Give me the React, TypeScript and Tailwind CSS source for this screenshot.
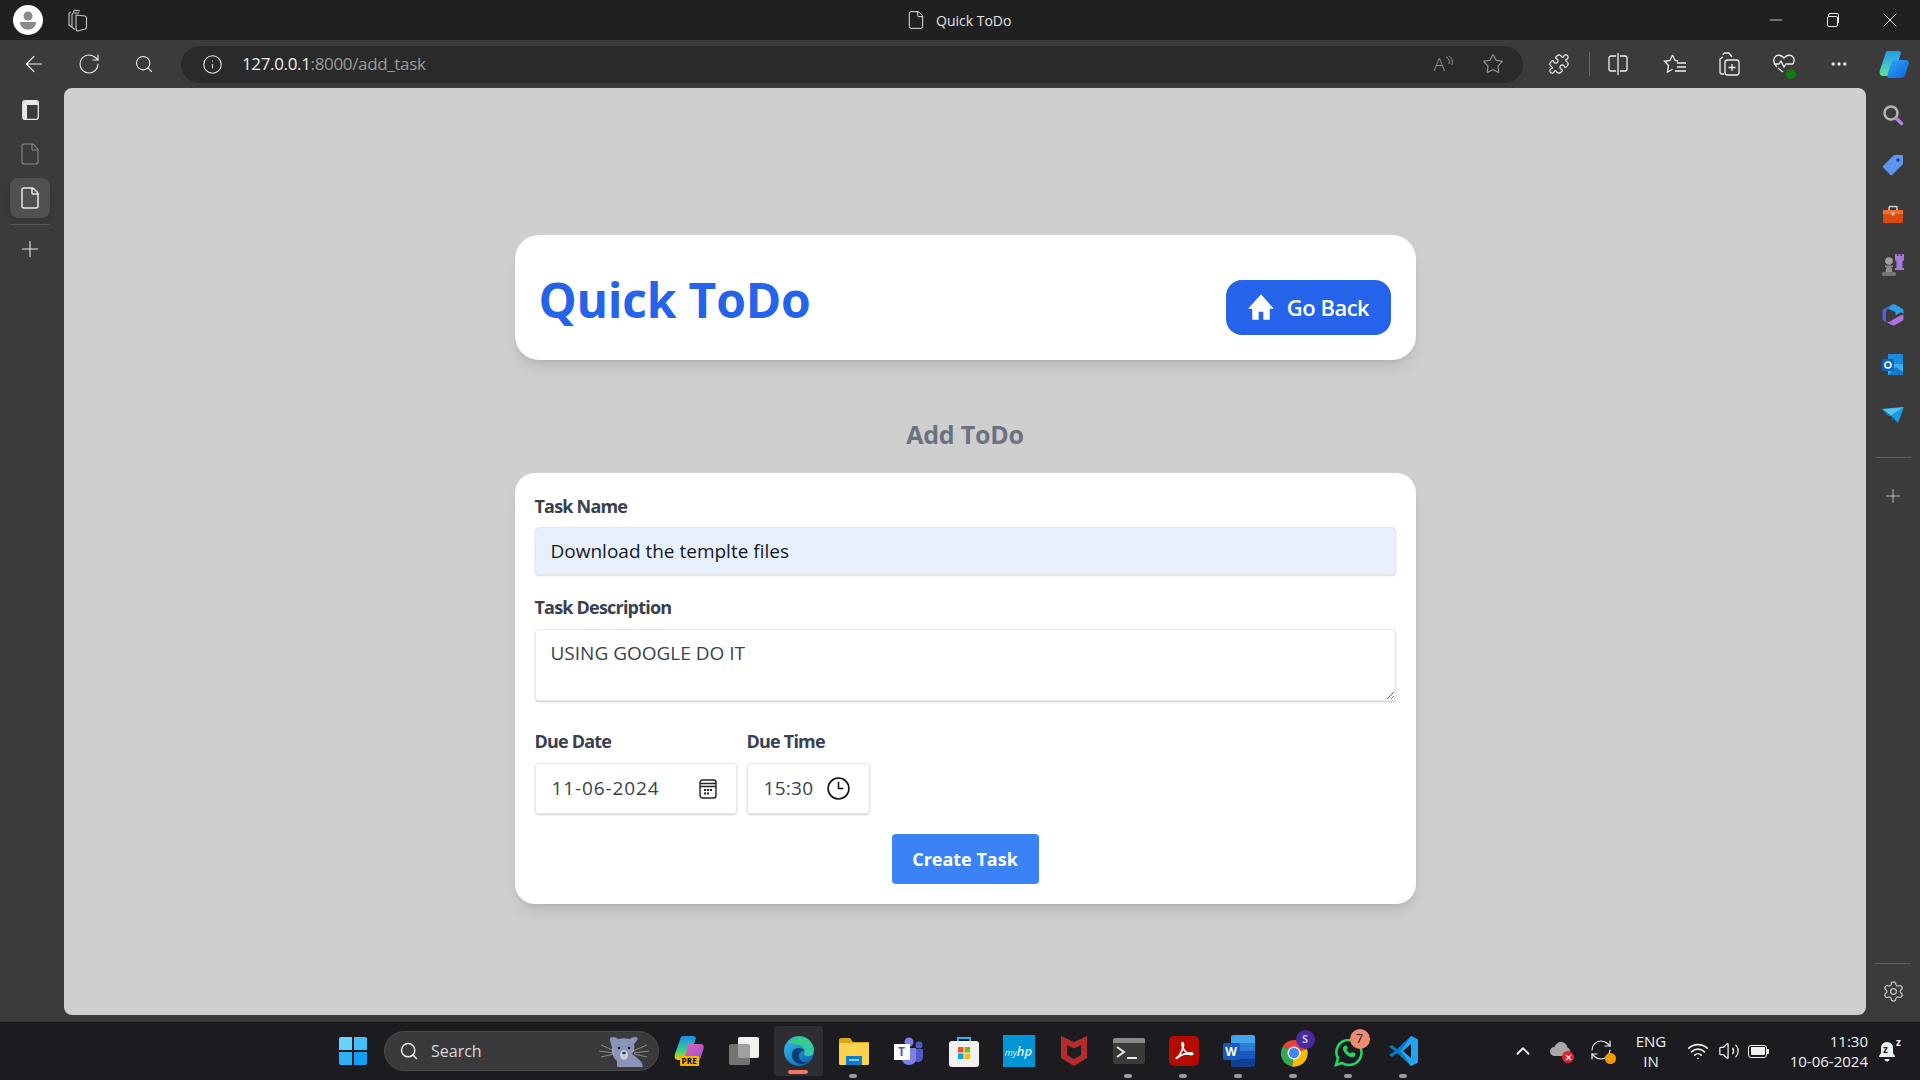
import React from 'react';
import {
  ArrowLeft, RotateCw, RefreshCw, Search, Info, Star, Puzzle, Ellipsis, Plus, Settings,
  Minus, X, File, ChevronUp, Wifi, Volume2, Clock3,
} from 'lucide-react';

const FONT = 'font-["Open_Sans","Noto_Sans",sans-serif]';

// Small coloured logos drawn by hand
const ProfileIcon = () => (
  <svg width="30" height="30" viewBox="0 0 30 30">
    <circle cx="15" cy="15" r="15" fill="#fff" />
    <circle cx="15" cy="11" r="4.5" fill="#8a8a8a" />
    <path d="M7 17h16c0 5-3.5 7.5-8 7.5S7 22 7 17z" fill="#8a8a8a" />
  </svg>
);

const TabsIcon = () => (
  <svg width="22" height="24" viewBox="0 0 22 24" fill="none" stroke="#c8c8c8" strokeWidth="1.100">
    <path d="M9 21L8 21 3 17V6c0-1 1-2 2-2" />
    <path d="M7 4l2-2 5 1" />
    <path d="M6 19V7c0-1 1-2 2-2h5" />
    <path d="M10 7l9 1c1 0 1.500 1 1.500 2v9c0 1-.5 1.500-1.500 2l-7 2c-1 0-2-.5-2-2z" />
  </svg>
);

const SidebarToggle = () => (
  <svg width="17" height="20" viewBox="0 0 17 20">
    <rect x=".7" y=".7" width="15.600" height="18.600" rx="2" fill="none" stroke="#e8e8e8" strokeWidth="1.300" />
    <path d="M1 3C1 2 2 1 3 1h11c1 0 2 1 2 2v2H5v14H3c-1 0-2-1-2-2z" fill="#e8e8e8" />
  </svg>
);

const SplitIcon = () => (
  <svg width="20" height="24" viewBox="0 0 20 24" fill="none" stroke="currentColor" strokeWidth="1.300">
    <path d="M8 4H3c-1 0-2 1-2 2v11c0 1 1 2 2 2h5" />
    <path d="M12 4h5c1 0 2 1 2 2v11c0 1-1 2-2 2h-5" />
    <path d="M10 1v22" />
  </svg>
);

const FavoritesIcon = () => (
  <svg width="24" height="24" viewBox="0 0 24 24" fill="none" stroke="currentColor" strokeWidth="1.300">
    <path d="M9.500 3l2.500 5.500 3 .5M9.500 3L7 8.500l-5.500.8L5.500 13.500 4.500 20l5-2.800" />
    <path d="M14 11h9M14 15h9M12 19h11" />
  </svg>
);

const CopilotLogo = () => (
  <svg width="32" height="32" viewBox="0 0 32 32">
    <defs>
      <linearGradient id="cpA" x1="0" y1="0" x2="0" y2="1">
        <stop offset="0" stopColor="#1f9cf0" />
        <stop offset="1" stopColor="#5fe0a0" />
      </linearGradient>
      <linearGradient id="cpB" x1="0" y1="0" x2="1" y2="1">
        <stop offset="0" stopColor="#2fa8f5" />
        <stop offset="1" stopColor="#1060e0" />
      </linearGradient>
    </defs>
    <path d="M10 3h10c2 0 3 1 3 2l-6 19c-1 3-3 4-5 4H5C2 28 1 25 2 22L7 7c.6-2.500 1.500-4 3-4z" fill="url(#cpA)" />
    <path d="M14 12h13c3 0 4.500 2 3.500 5l-3 9c-1 3-2.500 4-5 4H11c-2 0-2-2-1.500-3.500z" fill="url(#cpB)" />
  </svg>
);

const CopilotPreLogo = () => (
  <div className="relative w-[32px] h-[32px]">
    <svg width="32" height="28" viewBox="0 0 32 28">
      <defs>
        <linearGradient id="cppA" x1="0" y1="0" x2="0" y2="1">
          <stop offset="0" stopColor="#1a8cf0" />
          <stop offset=".6" stopColor="#38d08a" />
          <stop offset="1" stopColor="#f5c800" />
        </linearGradient>
        <linearGradient id="cppB" x1="0" y1="0" x2="1" y2="1">
          <stop offset="0" stopColor="#e85fb0" />
          <stop offset="1" stopColor="#9050e0" />
        </linearGradient>
      </defs>
      <path d="M10 1h10c2 0 3 1 3 2l-6 18c-1 3-3 4-5 4H5C2 25 1 22 2 19L7 5c.6-2.500 1.500-4 3-4z" fill="url(#cppA)" />
      <path d="M15 9h12c3 0 4.500 2 3.500 5l-3 9c-1 3-2.500 4-5 4H13c-2 0-2-2-1.500-3.500z" fill="url(#cppB)" />
    </svg>
    <span className={`absolute left-[7px] top-[21px] px-[2px] bg-[#f5b800] text-black text-[8px] leading-[10px] font-bold rounded-[1px] tracking-wide ${FONT}`}>PRE</span>
  </div>
);

const SearchSide = () => (
  <svg width="24" height="24" viewBox="0 0 24 24" fill="none">
    <circle cx="10" cy="10" r="6.500" stroke="#b5b5b5" strokeWidth="2.500" />
    <path d="M15.500 15.500l5 5" stroke="#b480e0" strokeWidth="3.500" strokeLinecap="round" />
  </svg>
);
const TagSide = () => (
  <svg width="24" height="24" viewBox="0 0 24 24">
    <path d="M13 2h8c.6 0 1 .4 1 1v8L11 22c-.5.5-1 .5-1.500 0L2 14.500c-.5-.5-.5-1 0-1.500z" fill="#5f95ee" />
    <circle cx="17" cy="7" r="1.800" fill="#1f3a70" />
  </svg>
);
const ToolboxSide = () => (
  <svg width="24" height="24" viewBox="0 0 24 24">
    <path d="M8 7V4.500C8 4 8.500 3.500 9 3.500h6c.5 0 1 .5 1 1V7" fill="none" stroke="#d0d0d0" strokeWidth="1.500" />
    <path d="M2 7h20l.3 4H1.700z" fill="#f0703a" />
    <rect x="2" y="11" width="20" height="9" rx="1" fill="#d84a10" />
    <circle cx="12" cy="11" r="1.800" fill="#e0c0b0" />
  </svg>
);
const ChessSide = () => (
  <svg width="24" height="24" viewBox="0 0 24 24">
    <path d="M14 1h2v2h1.500V1h2v2H21V1h2v6l-1.500 1.500V15H23v2h-9v-2h1.500V8.500L14 7z" fill="#a97ade" />
    <circle cx="8" cy="8" r="3.800" fill="#a0a0a0" />
    <path d="M4 12.500h8v1.500H10.500l1 5H4.500l1-5H4z" fill="#8d8d8d" />
    <rect x="1" y="19" width="14" height="4" rx="1.500" fill="#757575" />
  </svg>
);
const M365Side = () => (
  <svg width="24" height="24" viewBox="0 0 24 24">
    <path d="M11 1.500L3 6c-1 .6-1.500 1.500-1.500 2.500v7c0 1 .5 2 1.500 2.500l2 1V9c0-1.500 1-2.700 2-3.300z" fill="#5a5fd8" />
    <path d="M11 1.500c1-.5 2-.5 3 0l7 4c1 .6 1.500 1.500 1.500 2.500v4c0-2-2.500-3-4-2l-4 2.500V9L7 5.700z" fill="#2aa0e8" />
    <path d="M22.500 12v3.500c0 1-.5 2-1.500 2.500l-7 4c-1 .5-2 .5-3 0l-6-3c2 .5 3.500 0 5-1l8-5c1.500-1 4.500-1 4.500-1z" fill="#b070e0" />
  </svg>
);
const OutlookSide = () => (
  <svg width="24" height="24" viewBox="0 0 24 24">
    <rect x="7" y="1" width="15" height="10" fill="#1a8ce0" />
    <path d="M7 11l15 0v11H7z" fill="#36b0ee" />
    <path d="M7 22l8-8 7 5v3z" fill="#1a78c8" />
    <rect x="1" y="6" width="12" height="12" rx="1.500" fill="#0c64c0" />
    <circle cx="7" cy="12" r="3" fill="none" stroke="#fff" strokeWidth="1.600" />
  </svg>
);
const SendSide = () => (
  <svg width="24" height="24" viewBox="0 0 24 24">
    <path d="M1 6l22-2-13 9z" fill="#4cc4f4" />
    <path d="M23 4l-6 16-7-7z" fill="#1b9ae8" />
    <path d="M10 13l-3 0-6-7z" fill="#0c78c8" />
    <path d="M10 13l1 5 3-2z" fill="#0a5fa8" />
  </svg>
);

const WindowsLogo = () => (
  <div className="grid grid-cols-2 gap-[2px] w-[28px] h-[28px]">
    <div className="bg-[#69d2fb] rounded-tl-[2px]" />
    <div className="bg-[#45bdf8] rounded-tr-[2px]" />
    <div className="bg-[#2cb0f8] rounded-bl-[2px]" />
    <div className="bg-[#119ff5] rounded-br-[2px]" />
  </div>
);

const Mascot = () => (
  <svg width="50" height="32" viewBox="0 0 50 32">
    <path d="M11 3c3-2 6-1 8 1 4-1 8-1 12 0 2-2 5-3 8-1-1 3-3 5-4 6 1 4 0 8-2 10 4 3 8 6 10 9l1 4H18l0-6c-4-3-6-9-5-14-1-2-2-6-2-9z" fill="#8a93b8" />
    <circle cx="20" cy="13" r="1.300" fill="#222" />
    <circle cx="30" cy="13" r="1.300" fill="#222" />
    <ellipse cx="25" cy="20" rx="4" ry="5" fill="#c8cde0" />
    <ellipse cx="25" cy="18" rx="1.800" ry="1.300" fill="#333" />
    <path d="M2 10l14 6M0 16l15 2M2 22l13-3M48 10l-14 6M50 16l-15 2M48 22l-13-3" stroke="#c8c8c8" strokeWidth=".6" />
  </svg>
);

const EdgeLogo = () => (
  <svg width="32" height="32" viewBox="0 0 32 32">
    <defs>
      <linearGradient id="edA" x1="0" y1="0" x2="1" y2="1">
        <stop offset="0" stopColor="#35c1f1" />
        <stop offset="1" stopColor="#0c59a4" />
      </linearGradient>
      <linearGradient id="edB" x1="0" y1="0" x2="1" y2="1">
        <stop offset="0" stopColor="#38d06a" />
        <stop offset="1" stopColor="#2fc9c0" />
      </linearGradient>
    </defs>
    <circle cx="16" cy="16" r="15" fill="url(#edA)" />
    <path d="M6 8C10 1 21-1 27 6c4 4 4.500 10 3 13-2 3-8 3-9 0 2-3 0-8-5-9-4-1-8-1-10-2z" fill="url(#edB)" />
    <path d="M14 28c-6-3-7-11-2-14 3-2 8-1 9 2-3 0-5 2-5 5 0 4 4 7 9 6-3 2-8 3-11 1z" fill="#0a3d78" />
  </svg>
);

const FolderLogo = () => (
  <svg width="32" height="32" viewBox="0 0 32 32">
    <path d="M1 5c0-1 1-2 2-2h9l3 4h16v4H1z" fill="#e0a417" />
    <rect x="1" y="8" width="30" height="22" rx="1.500" fill="#fcd34d" />
    <rect x="8" y="21" width="16" height="9" fill="#0f7cc9" />
    <rect x="11" y="24" width="10" height="2" fill="#7fc8f0" />
  </svg>
);

const TeamsLogo = () => (
  <div className="relative w-[30px] h-[28px]">
    <svg width="30" height="28" viewBox="0 0 30 28" className="absolute inset-0">
      <circle cx="15" cy="5" r="4.500" fill="#7b83eb" />
      <circle cx="25" cy="8" r="3.500" fill="#5059c9" />
      <path d="M20 12h9v8c0 3-2 5-5 5-1.500 0-3-.5-4-1.500z" fill="#5059c9" />
      <path d="M8 11h14v11c0 3-3 6-7 6-4 0-7-3-7-6z" fill="#7b83eb" />
    </svg>
    <span className={`absolute left-0 top-[7px] w-[16px] h-[16px] bg-white text-[#4b53bc] text-[12px] font-bold flex items-center justify-center ${FONT}`}>T</span>
  </div>
);

const StoreLogo = () => (
  <svg width="32" height="32" viewBox="0 0 32 32">
    <path d="M10 8V3h12v5" fill="none" stroke="#29b6f6" strokeWidth="2" />
    <rect x="1" y="6" width="30" height="26" rx="3" fill="#f2f2f2" />
    <rect x="10" y="12" width="5.500" height="5.500" fill="#f25022" />
    <rect x="16.500" y="12" width="5.500" height="5.500" fill="#7fba00" />
    <rect x="10" y="18.500" width="5.500" height="5.500" fill="#00a4ef" />
    <rect x="16.500" y="18.500" width="5.500" height="5.500" fill="#ffb900" />
  </svg>
);

const McAfeeLogo = () => (
  <svg width="28" height="32" viewBox="0 0 28 32">
    <path d="M1 1l13 6 13-6v22l-13 8-13-8z" fill="#b52c2c" />
    <path d="M7 10l7 3.500 7-3.500v10l-7 4-7-4z" fill="#1c1c22" />
  </svg>
);

const TerminalLogo = () => (
  <div className="w-[32px] h-[26px] bg-[#3a3a3a] rounded-[2px] overflow-hidden relative">
    <div className="h-[5px] bg-[#8a8a8a]" />
    <svg width="32" height="21" viewBox="0 0 32 21" className="absolute top-[5px] left-0" fill="none">
      <path d="M4 4l7 5-7 5" stroke="#e8e8e8" strokeWidth="2" />
      <path d="M14 15h10" stroke="#e8e8e8" strokeWidth="2" />
    </svg>
  </div>
);

const AcrobatLogo = () => (
  <div className="w-[30px] h-[30px] bg-[#b30b00] rounded-[5px] flex items-center justify-center">
    <svg width="22" height="22" viewBox="0 0 24 24" fill="none" stroke="#fff" strokeWidth="2">
      <path d="M3 20c3-1 6-6 8-12 1-4 0-5-.5-5S9 4 11 9c2 4 6 7 9 7 2 0 2-2 0-2-4 0-12 2-16 6z" />
    </svg>
  </div>
);

const WordLogo = () => (
  <div className="relative w-[32px] h-[32px]">
    <div className="absolute right-0 top-0 w-[24px] h-[32px] rounded-[2px] overflow-hidden flex flex-col">
      <div className="flex-1 bg-[#41a5ee]" />
      <div className="flex-1 bg-[#2b7cd3]" />
      <div className="flex-1 bg-[#185abd]" />
      <div className="flex-1 bg-[#103f91]" />
    </div>
    <span className={`absolute left-0 top-[8px] w-[17px] h-[17px] bg-[#185abd] rounded-[2px] text-white text-[12px] font-bold flex items-center justify-center ${FONT}`}>W</span>
  </div>
);

const ChromeLogo = () => (
  <div className="relative w-[30px] h-[32px]">
    <svg width="30" height="30" viewBox="0 0 30 30" className="absolute left-0 top-[3px]">
      <path d="M15 15L4 8A13.500 13.500 0 0 1 28 11z" fill="#ea4335" />
      <path d="M15 15L28 11A13.500 13.500 0 0 1 13 28.500z" fill="#fbbc04" />
      <path d="M15 15L13 28.500A13.500 13.500 0 0 1 4 8z" fill="#34a853" />
      <circle cx="15" cy="15" r="6.500" fill="#fff" />
      <circle cx="15" cy="15" r="5.200" fill="#4285f4" />
    </svg>
    <span className={`absolute right-[-6px] top-[-5px] w-[19px] h-[19px] rounded-full bg-[#4c2a9e] text-[#c9b8f0] text-[11px] font-bold flex items-center justify-center ${FONT}`}>S</span>
  </div>
);

const WhatsAppLogo = () => (
  <div className="relative w-[30px] h-[32px]">
    <svg width="30" height="30" viewBox="0 0 30 30" fill="none" className="absolute left-0 top-[2px]">
      <path d="M2 28l2-7C0 14 4 3 15 3c7 0 12.500 5.500 12.500 12.500S22 28 15 28c-2.500 0-5-.7-7-2z" stroke="#25d366" strokeWidth="2.600" />
      <path d="M10 9c-2 2-1 6 3 9 3 2.500 6 3 8 1l.5-2.500-3.500-1.500-1.500 1.500c-2-1-3.500-2.500-4-4l1.500-1.500L12.500 8.500z" fill="#25d366" />
    </svg>
    <span className={`absolute right-[-6px] top-[-6px] w-[20px] h-[20px] rounded-full bg-[#f08a70] text-[#1c1c1c] text-[13px] flex items-center justify-center ${FONT}`}>7</span>
  </div>
);

const VsCodeLogo = () => (
  <svg width="30" height="32" viewBox="0 0 30 32">
    <path d="M22 1l7 3.500v23L22 31 8 18l-5 4-3-2 6-4-6-4 3-2 5 4z" fill="#0a7ac8" />
    <path d="M22 1l7 3.500v23L22 31 12 16z" fill="#22a5f1" />
    <path d="M22 9v14l-8-7z" fill="#1c1c22" />
  </svg>
);

const HouseIcon = () => (
  <svg width="28" height="28" viewBox="0 0 24 24" fill="#fff">
    <path d="M12 1L23 13.500H19.500V23H14V16H10V23H4.500V13.500H1Z" />
  </svg>
);

const CalendarIcon = () => (
  <svg width="18" height="20" viewBox="0 0 18 20" fill="none" stroke="#222" strokeWidth="1.400">
    <rect x="1" y="1" width="16" height="18" rx="2.500" />
    <path d="M1 4.500h16M1 7.500h16" />
    <g fill="#222" stroke="none">
      <rect x="5" y="10" width="2" height="2" />
      <rect x="8" y="10" width="2" height="2" />
      <rect x="11" y="10" width="2" height="2" />
      <rect x="5" y="13.500" width="2" height="2" />
      <rect x="8" y="13.500" width="2" height="2" />
    </g>
  </svg>
);

const CloudError = () => (
  <div className="relative w-[24px] h-[20px]">
    <svg width="20" height="14" viewBox="0 0 20 14" className="absolute left-0 top-[1px]">
      <path d="M5 14C2 14 0 12 0 9.500S2 5 4.500 5C5.500 2 8 0 11 0c3.500 0 6 2.500 6.500 5.500 1.500.5 2.500 2 2.500 4 0 2.500-2 4.500-4.500 4.500z" fill="#a8a8a8" />
    </svg>
    <div className="absolute right-0 bottom-[-2px] w-[12px] h-[12px] rounded-full bg-[#e0202a] flex items-center justify-center">
      <X size={9} strokeWidth={3} className="text-white" />
    </div>
  </div>
);

const BatteryIcon = () => (
  <div className="flex items-center">
    <div className="w-[19px] h-[13px] rounded-[3px] border-[1.500px] border-[#f0f0f0] p-[1.500px]">
      <div className="w-full h-full bg-[#f0f0f0] rounded-[1px]" />
    </div>
    <div className="w-[2px] h-[5px] bg-[#f0f0f0] rounded-r-[1px]" />
  </div>
);

const BellSleep = () => (
  <div className="relative w-[20px] h-[22px]">
    <svg width="20" height="22" viewBox="0 0 20 22" className="absolute inset-0">
      <path d="M9 2c-4 0-6 3-6 6v5l-2 3v1h16v-1l-2-3V8c0-3-2-6-6-6z" fill="#f0f0f0" />
      <path d="M6.500 19h5c0 1.500-1 2.500-2.500 2.500s-2.500-1-2.500-2.500z" fill="#f0f0f0" />
    </svg>
    <span className="absolute left-[5px] top-[4px] text-[10px] leading-[10px] font-bold text-[#1c1c20]">z</span>
    <span className="absolute right-[-3px] top-[-3px] text-[10px] leading-[10px] font-bold text-[#f0f0f0]">z</span>
  </div>
);

const taskbarApps = [
  { key: 'copilot', icon: <CopilotPreLogo /> },
  { key: 'taskview', icon: <div className="relative w-[30px] h-[28px]"><div className="absolute right-0 top-0 w-[21px] h-[21px] bg-[#f2f2f2] rounded-[2px]" /><div className="absolute left-0 bottom-0 w-[21px] h-[21px] bg-[#8a8a8a]/80 rounded-[2px]" /></div> },
  { key: 'edge', active: true, icon: <EdgeLogo /> },
  { key: 'files', dot: true, icon: <FolderLogo /> },
  { key: 'teams', icon: <TeamsLogo /> },
  { key: 'store', icon: <StoreLogo /> },
  { key: 'myhp', icon: <div className={`w-[32px] h-[32px] bg-[#0096d6] flex items-baseline justify-center pt-[7px] text-[#d8f0fa] italic ${FONT}`}><span className="text-[9px]">my</span><span className="text-[13px] font-semibold">hp</span></div> },
  { key: 'mcafee', icon: <McAfeeLogo /> },
  { key: 'terminal', dot: true, icon: <TerminalLogo /> },
  { key: 'acrobat', dot: true, icon: <AcrobatLogo /> },
  { key: 'word', dot: true, icon: <WordLogo /> },
  { key: 'chrome', dot: true, icon: <ChromeLogo /> },
  { key: 'whatsapp', dot: true, icon: <WhatsAppLogo /> },
  { key: 'vscode', dot: true, icon: <VsCodeLogo /> },
];

const TitleBar = () => (
  <div className="h-[40px] bg-[#202020] flex items-center relative shrink-0">
    <div className="ml-[13px]"><ProfileIcon /></div>
    <div className="ml-[23px]"><TabsIcon /></div>
    <div className="absolute left-[906px] top-0 h-full flex items-center gap-[10px] text-[#e4e4e4] text-[14px]">
      <File size={20} strokeWidth={1.2} />
      <span>Quick ToDo</span>
    </div>
    <div className="ml-auto flex items-center text-[#e8e8e8]">
      <div className="w-[56px] flex justify-center"><Minus size={20} strokeWidth={1} /></div>
      <div className="w-[56px] flex justify-center relative">
        <div className="w-[11px] h-[11px] border border-[#e8e8e8] rounded-[2px] bg-[#202020] mt-[2px] relative z-10" />
        <div className="w-[11px] h-[11px] border border-[#e8e8e8] rounded-[2px] absolute left-[24px] top-[-1px]" />
      </div>
      <div className="w-[60px] flex justify-center"><X size={24} strokeWidth={1} /></div>
    </div>
  </div>
);

const ToolBar = () => (
  <div className="h-[48px] bg-[#3b3b3b] flex items-center shrink-0 text-[#f0f0f0]">
    <div className="w-[68px] flex justify-center"><ArrowLeft size={26} strokeWidth={1.1} /></div>
    <div className="w-[42px] flex justify-center"><RotateCw size={24} strokeWidth={1.1} /></div>
    <div className="w-[68px] flex justify-center"><Search size={20} strokeWidth={1.3} /></div>
    <div className="ml-[3px] w-[1342px] h-[37px] bg-[#2a2a2a] rounded-full flex items-center">
      <Info size={21} strokeWidth={1.2} className="ml-[21px]" />
      <span className="ml-[19px] text-[17px] tracking-[-0.35px]">127.0.0.1<span className="text-[#9a9a9a]">:8000/add_task</span></span>
      <div className="ml-auto flex items-center text-[#9a9a9a] gap-[28px] pr-[19px]">
        <span className="flex items-start text-[19px] font-light leading-none">A<svg width="9" height="13" viewBox="0 0 9 13" fill="none" stroke="currentColor"><path d="M1 2c3 1 4 4 3 7M4 1c3 2 4 5 3 9" /></svg></span>
        <Star size={22} strokeWidth={1.2} />
      </div>
    </div>
    <div className="ml-[24px] w-[24px] flex justify-center"><Puzzle size={22} strokeWidth={1.3} /></div>
    <div className="ml-[18px] w-[1px] h-[24px] bg-[#6a6a6a]" />
    <div className="ml-[16px] w-[24px] flex justify-center"><SplitIcon /></div>
    <div className="ml-[33px] w-[24px] flex justify-center"><FavoritesIcon /></div>
    <div className="ml-[30px] w-[24px] flex justify-center relative">
      <svg width="22" height="24" viewBox="0 0 22 24" fill="none" stroke="currentColor" strokeWidth="1.300"><path d="M5 5l-3 2v13c0 1 1 2 2 2h2" /><path d="M5 3c0-1 1-2 2-2h4l3 4" /><rect x="7" y="8" width="14" height="15" rx="2.500" /><path d="M14 12v7M10.500 15.500h7" /></svg>
    </div>
    <div className="ml-[31px] w-[24px] flex justify-center relative">
      <svg width="24" height="24" viewBox="0 0 24 24" fill="none" stroke="currentColor" strokeWidth="1.300"><path d="M5 15C2 12 1 10 2 7c1-4 6-5 9-2l1 1 1-1c3-3 8-2 9 2 .4 2 0 3-1 5" /><path d="M2 12h5l2-3 3 6 2-3h7" /><path d="M6 16l5 4" /></svg>
      <div className="absolute right-0 bottom-[-3px] w-[10px] h-[10px] rounded-full bg-[#107c10]" />
    </div>
    <div className="ml-[31px] w-[24px] flex justify-center"><Ellipsis size={20} strokeWidth={2} /></div>
    <div className="ml-[27px]"><CopilotLogo /></div>
  </div>
);

const LeftRail = () => (
  <div className="w-[64px] bg-[#3b3b3b] flex flex-col items-center shrink-0 pr-[4px] text-[#e8e8e8]">
    <div className="mt-[2px] h-[40px] flex items-center"><SidebarToggle /></div>
    <div className="mt-[2px] h-[44px] flex items-center text-[#8a8a8a]"><File size={24} strokeWidth={1.1} /></div>
    <div className="mt-[2px] w-[40px] h-[40px] bg-[#505050] rounded-[8px] shadow-md flex items-center justify-center"><File size={24} strokeWidth={1.5} /></div>
    <div className="mt-[6px] w-[40px] h-[1px] bg-[#5a5a5a]" />
    <div className="mt-[12px] h-[24px] flex items-center"><Plus size={26} strokeWidth={1} /></div>
  </div>
);

const RightRail = () => (
  <div className="w-[54px] bg-[#3b3b3b] flex flex-col items-center shrink-0 pt-[2px] pb-[18px] text-[#c8c8c8]">
    {[<SearchSide />, <TagSide />, <ToolboxSide />, <ChessSide />, <M365Side />, <OutlookSide />, <SendSide />].map((icon, i) => (
      <div key={i} className="h-[50px] flex items-center justify-center">{icon}</div>
    ))}
    <div className="mt-[17px] w-[36px] h-[1px] bg-[#5f5f5f]" />
    <div className="mt-[27px]"><Plus size={22} strokeWidth={1} /></div>
    <div className="mt-auto w-[36px] h-[1px] bg-[#5f5f5f]" />
    <div className="mt-[16px]"><Settings size={23} strokeWidth={1.3} /></div>
  </div>
);

const TaskForm = () => (
  <div className="w-[901px] bg-white rounded-[20px] shadow-lg px-[20px] pt-[19px] pb-[20px] text-[#374151]">
    <label className="block text-[18px] font-bold leading-[28px] mb-[7px] tracking-[-0.8px]">Task Name</label>
    <input readOnly value="Download the templte files" className="w-full h-[48px] px-[15px] bg-[#e8f0fe] rounded-[4px] shadow-[0_1px_2px_rgba(0,0,0,0.15)] border border-[#e5e7eb] text-[19px] text-[#111827] outline-none" />
    <label className="block text-[18px] font-bold leading-[28px] mt-[18px] mb-[8px] tracking-[-0.8px]">Task Description</label>
    <textarea readOnly defaultValue="USING GOOGLE DO IT" className="block w-full h-[72px] px-[15px] py-[9px] bg-white rounded-[4px] shadow-[0_1px_2px_rgba(0,0,0,0.2)] border border-[#e5e7eb] text-[19px] text-[#374151] outline-none" />
    <div className="flex gap-[10px] mt-[26px]">
      <div className="w-[202px]">
        <div className="text-[18px] font-bold leading-[28px] mb-[8px] tracking-[-0.8px]">Due Date</div>
        <div className="h-[51px] border border-[#e5e7eb] rounded-[4px] shadow-[0_1px_2px_rgba(0,0,0,0.2)] flex items-center pl-[16px] pr-[19px] text-[19px]">
          <span className="tracking-[0.9px]">11-06-2024</span>
          <div className="ml-auto"><CalendarIcon /></div>
        </div>
      </div>
      <div className="w-[123px]">
        <div className="text-[18px] font-bold leading-[28px] mb-[8px] tracking-[-0.8px]">Due Time</div>
        <div className="h-[51px] border border-[#e5e7eb] rounded-[4px] shadow-[0_1px_2px_rgba(0,0,0,0.2)] flex items-center pl-[16px] text-[19px]">
          <span className="tracking-[0.3px]">15:30</span>
          <Clock3 size={25} strokeWidth={1.5} className="ml-[13px] text-[#111]" />
        </div>
      </div>
    </div>
    <div className="flex justify-center mt-[20px]">
      <button className="w-[147px] h-[50px] bg-[#3b82f6] text-white text-[18px] font-bold rounded-[4px]">Create Task</button>
    </div>
  </div>
);

const PageContent = () => (
  <div className="flex-1 bg-[#cfcfcf] rounded-[8px] mb-[6px] flex flex-col items-center pt-[147px]">
    <div className="w-[901px] h-[125px] bg-white rounded-[24px] shadow-lg flex items-center justify-between pl-[24px] pr-[25px]">
      <h1 className="text-[48px] font-bold text-[#2563eb] tracking-[-0.2px] mt-[4px]">Quick ToDo</h1>
      <button className="w-[165px] h-[55px] mt-[19px] bg-[#2563eb] rounded-[16px] text-white text-[22px] font-semibold flex items-center justify-center gap-[12px] tracking-[-0.5px]">
        <HouseIcon />
        Go Back
      </button>
    </div>
    <h2 className="mt-[58px] mb-[23px] text-[25px] leading-[32px] font-bold text-[#6b7280] tracking-[-0.2px]">Add ToDo</h2>
    <TaskForm />
  </div>
);

const Taskbar = () => (
  <div className="h-[59px] bg-[#1c1c20] border-t border-[#333] flex items-center shrink-0 text-white">
    <div className="ml-[326px] w-[54px] h-full flex items-center justify-center"><WindowsLogo /></div>
    <div className="ml-[4px] w-[275px] h-[40px] rounded-full bg-[#3a3a3c] border border-[#4a4a4c] flex items-center pl-[14px] overflow-hidden">
      <Search size={20} strokeWidth={1.8} className="text-[#e8e8e8]" />
      <span className="ml-[12px] text-[16px] text-[#d8d8d8]">Search</span>
      <div className="ml-auto mr-[9px]"><Mascot /></div>
    </div>
    <div className="ml-[2px] flex h-full">
      {taskbarApps.map((app) => (
        <div key={app.key} className="w-[55px] h-full flex items-center justify-center relative">
          {app.active && <div className="absolute inset-x-[3px] inset-y-[4px] bg-[#2e2e32] rounded-[4px]" />}
          <div className="relative">{app.icon}</div>
          {app.dot && <div className="absolute bottom-[2px] left-[23px] w-[8px] h-[4px] rounded-full bg-[#9a9a9a]" />}
          {app.active && <div className="absolute bottom-[6px] left-[17px] w-[20px] h-[4px] rounded-full bg-[#f07860]" />}
        </div>
      ))}
    </div>
    <div className="ml-[81px] flex items-center text-[#f0f0f0]">
      <ChevronUp size={22} strokeWidth={2} />
      <div className="ml-[16px]"><CloudError /></div>
      <div className="ml-[15px] relative w-[26px] h-[26px]">
        <RefreshCw size={24} strokeWidth={1.2} />
        <div className="absolute right-[-1px] bottom-0 w-[11px] h-[11px] rounded-full bg-[#f59b00]" />
      </div>
      <div className="ml-[17px] w-[38px] text-center text-[15px] leading-[20px]"><div>ENG</div><div>IN</div></div>
      <Wifi size={22} strokeWidth={1.8} className="ml-[17px]" />
      <Volume2 size={22} strokeWidth={1.4} className="ml-[9px]" />
      <div className="ml-[8px]"><BatteryIcon /></div>
      <div className="ml-[17px] w-[82px] text-right text-[15px] leading-[20px] shrink-0"><div>11:30</div><div className="whitespace-nowrap">10-06-2024</div></div>
      <div className="ml-[10px]"><BellSleep /></div>
    </div>
  </div>
);

export default function App() {
  return (
    <div className={`w-[1920px] h-screen overflow-hidden flex flex-col bg-[#3b3b3b] ${FONT}`}>
      <TitleBar />
      <ToolBar />
      <div className="flex-1 flex min-h-0">
        <LeftRail />
        <PageContent />
        <RightRail />
      </div>
      <Taskbar />
    </div>
  );
}
